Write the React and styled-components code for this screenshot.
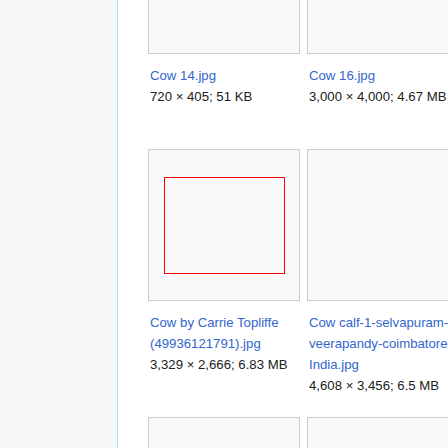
import React from "react";
import styled, { createGlobalStyle } from "styled-components";

const Global = createGlobalStyle`
  html, body { margin: 0; padding: 0; overflow: hidden; background: #ffffff; }
  body { font-family: "Liberation Sans", Arial, sans-serif; }
`;

const Page = styled.div`
  display: flex;
  width: 448px;
  height: 448px;
  overflow: hidden;
`;

const Sidebar = styled.aside`
  flex: 0 0 117px;
  background: #f6f6f6;
  border-right: 1px solid #a7d7f9;
`;

const Content = styled.main`
  flex: 1 1 auto;
  min-width: 0;
  overflow: hidden;
  background: #ffffff;
  padding-left: 30px;
`;

const Gallery = styled.ul`
  list-style: none;
  margin: -98px 0 0 0;
  padding: 0;
  display: flex;
  flex-direction: column;
  gap: 21px;
`;

const Row = styled.div`
  display: flex;
  align-items: flex-start;
  gap: 7px;
`;

const Item = styled.li`
  flex: 0 0 152px;
  width: 152px;
`;

const Thumb = styled.div`
  box-sizing: border-box;
  width: 152px;
  height: 152px;
  background: #f8f9fa;
  border: 1px solid #c8ccd1;
  display: flex;
  align-items: center;
  justify-content: center;
`;

const Broken = styled.span`
  box-sizing: border-box;
  width: 121px;
  height: 97px;
  border: 1px solid #ff0000;
`;

const Caption = styled.div`
  margin-top: 11px;
  padding: 0 2px;
  font-size: 13.2px;
  line-height: 21px;
  color: #202122;
`;

const Name = styled.a`
  display: block;
  color: #3366cc;
  text-decoration: none;
`;

const Meta = styled.div`
  color: #202122;
`;

const rows = [
  [
    { name: "Cow 14.jpg", meta: "720 × 405; 51 KB" },
    { name: "Cow 16.jpg", meta: "3,000 × 4,000; 4.67 MB" },
    { name: "Cow grazing in a green meadow field.jpg", meta: "1,024 × 768; 320 KB" },
  ],
  [
    { name: "Cow by Carrie Topliffe (49936121791).jpg", meta: "3,329 × 2,666; 6.83 MB", broken: true },
    { name: "Cow calf-1-selvapuram-veerapandy-coimbatore-India.jpg", meta: "4,608 × 3,456; 6.5 MB" },
    { name: "Cow eating.jpg", meta: "2,048 × 1,536; 1.2 MB" },
  ],
  [
    { name: "Cow in field.jpg", meta: "800 × 600; 90 KB" },
    { name: "Cow portrait.jpg", meta: "1,200 × 900; 210 KB" },
    { name: "Cow standing.jpg", meta: "640 × 480; 64 KB" },
  ],
];

export default function App() {
  return (
    <>
      <Global />
      <Page>
        <Sidebar />
        <Content>
          <Gallery>
            {rows.map((row, ri) => (
              <Row key={ri}>
                {row.map((it, i) => (
                  <Item key={i}>
                    <Thumb>{it.broken && <Broken />}</Thumb>
                    <Caption>
                      <Name href="#">{it.name}</Name>
                      <Meta>{it.meta}</Meta>
                    </Caption>
                  </Item>
                ))}
              </Row>
            ))}
          </Gallery>
        </Content>
      </Page>
    </>
  );
}
